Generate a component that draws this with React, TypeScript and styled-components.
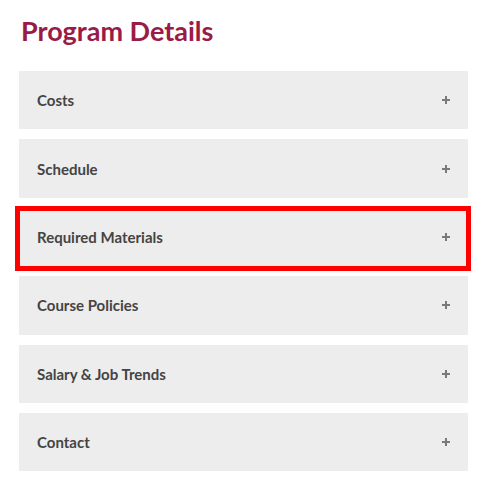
import React from "react";
import styled, { createGlobalStyle } from "styled-components";

const GlobalStyle = createGlobalStyle`
  html, body { margin: 0; padding: 0; background: #ffffff; }
  body { font-family: Lato, "Open Sans", sans-serif; }
`;

const Page = styled.div`
  padding: 13px 17px 0 19px;
  width: 449px;
`;

const Title = styled.h2`
  margin: 0 0 22px 2px;
  font-family: Lato, sans-serif;
  font-weight: 700;
  font-size: 27px;
  line-height: 36px;
  color: #9b1b47;
`;

const List = styled.div`
  display: flex;
  flex-direction: column;
  gap: 10px;
`;

const Panel = styled.div`
  position: relative;
  height: 58.4px;
  background: #ededed;
  display: flex;
  align-items: center;
  justify-content: space-between;
  padding: 0 18px;
  box-sizing: border-box;
`;

const Label = styled.span`
  font-family: Lato, sans-serif;
  font-weight: 700;
  font-size: 15px;
  color: #444444;
`;

const Plus = styled.span`
  position: relative;
  width: 8px;
  height: 8px;
  &::before, &::after {
    content: "";
    position: absolute;
    background: #7a7a7a;
  }
  &::before { left: 0; right: 0; top: 3px; height: 2px; }
  &::after { top: 0; bottom: 0; left: 3px; width: 2px; }
`;

const Highlight = styled.div`
  position: absolute;
  top: -2px;
  bottom: -5px;
  left: -4px;
  right: -3px;
  border: 5px solid #ff0000;
  pointer-events: none;
`;

const items = [
  "Costs",
  "Schedule",
  "Required Materials",
  "Course Policies",
  "Salary & Job Trends",
  "Contact",
];

export default function App() {
  return (
    <>
      <GlobalStyle />
      <Page>
        <Title>Program Details</Title>
        <List>
          {items.map((t) => (
            <Panel key={t}>
              <Label>{t}</Label>
              <Plus />
              {t === "Required Materials" && <Highlight />}
            </Panel>
          ))}
        </List>
      </Page>
    </>
  );
}
